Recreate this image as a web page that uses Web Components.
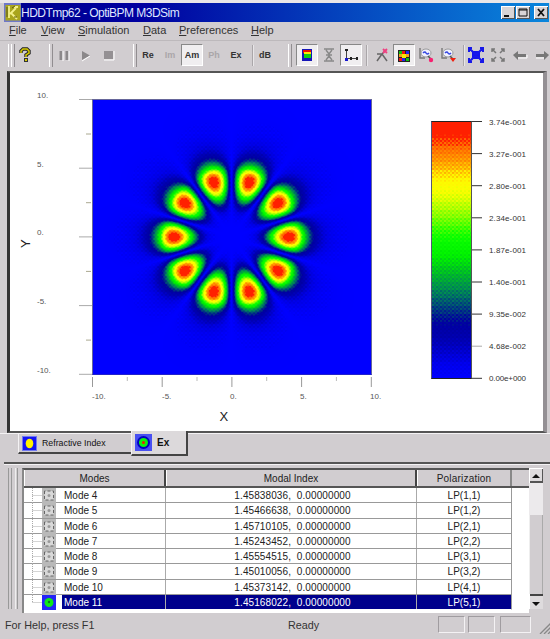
<!DOCTYPE html>
<html lang="en">
<head>
<meta charset="utf-8">
<title>HDDTmp62 - OptiBPM M3DSim</title>
<style>
  html, body { margin: 0; padding: 0; }
  body {
    width: 550px; height: 639px; overflow: hidden;
    background: #d1cdd0; color: #222;
    font-family: 'Liberation Sans', Arial, sans-serif; font-size: 10px;
  }
</style>
</head>
<body>
<app-window>
  <title-bar slot="title">HDDTmp62 - OptiBPM M3DSim</title-bar>
  <menu-bar slot="menu" items="File,View,Simulation,Data,Preferences,Help"></menu-bar>
  <tool-bar slot="tools"></tool-bar>
  <plot-view slot="view">
    <field-plot></field-plot>
    <color-scale></color-scale>
  </plot-view>
  <tab-strip slot="tabs">
    <view-tab icon="index" style="width:113px">Refractive Index</view-tab>
    <view-tab icon="field" style="width:57px" active>Ex</view-tab>
  </tab-strip>
  <mode-table slot="modes"></mode-table>
  <status-bar slot="status">
    <span>For Help, press F1</span>
    <span slot="state">Ready</span>
  </status-bar>
</app-window>

<script>
(function () {
  function define(name, html, setup) {
    customElements.define(name, class extends HTMLElement {
      connectedCallback() {
        if (this.shadowRoot) return;
        const shadow = this.attachShadow({ mode: 'open' });
        shadow.innerHTML = typeof html === 'function' ? html(this) : html;
        if (setup) setup(this, shadow);
      }
    });
  }

  // value 0..1 -> colour, shared by the field plot and the scale
  const STOPS = [
    [0, 0, 0, 255], [0.07, 0, 0, 228], [0.14, 0, 0, 180], [0.215, 0, 0, 158],
    [0.26, 0, 48, 132], [0.30, 0, 90, 112], [0.345, 0, 138, 84], [0.415, 0, 190, 36],
    [0.475, 0, 240, 0], [0.55, 10, 255, 0], [0.63, 130, 255, 0], [0.68, 196, 255, 0],
    [0.73, 250, 255, 0], [0.78, 255, 246, 0], [0.825, 255, 176, 0], [0.865, 255, 136, 0],
    [0.91, 255, 100, 0], [0.935, 255, 32, 0], [1, 255, 32, 0]
  ];
  const BAYER = [0, 8, 2, 10, 12, 4, 14, 6, 3, 11, 1, 9, 15, 7, 13, 5];

  function colorAt(v) {
    v = Math.max(0, Math.min(1, v));
    let i = 1;
    while (i < STOPS.length - 1 && v > STOPS[i][0]) i++;
    const a = STOPS[i - 1], b = STOPS[i];
    const t = (v - a[0]) / (b[0] - a[0]);
    return [1, 2, 3].map(k => a[k] + (b[k] - a[k]) * t);
  }

  function paint(canvas, amount, valueAt) {
    const w = canvas.width, h = canvas.height;
    const ctx = canvas.getContext('2d');
    const img = ctx.createImageData(w, h);
    for (let y = 0; y < h; y++) {
      for (let x = 0; x < w; x++) {
        const d = (BAYER[((y >> 1) & 3) * 4 + ((x >> 1) & 3)] / 15 - 0.5) * amount;
        const v = valueAt(x + 0.5, y + 0.5);
        const c = colorAt(v < 0.01 ? v : v + d);
        const p = (y * w + x) * 4;
        img.data[p] = c[0]; img.data[p + 1] = c[1]; img.data[p + 2] = c[2]; img.data[p + 3] = 255;
      }
    }
    ctx.putImageData(img, 0, 0);
  }

  // Bessel J5 as a power series
  function j5(x) {
    let term = Math.pow(x / 2, 5) / 120, sum = term;
    for (let m = 1; m < 24; m++) {
      term *= -(x * x / 4) / (m * (m + 5));
      sum += term;
    }
    return sum;
  }

  // LP(5,1): J5 in the core, decaying tail in the cladding
  function lp51(dx, dy) {
    const r = Math.hypot(dx, dy), core = 68, u = 6.41 / 57.5;
    const radial = r < core ? j5(u * r) : j5(u * core) * Math.exp(-0.086 * (r - core));
    return Math.abs(Math.cos(5 * Math.atan2(dy, dx))) * radial / 0.3741;
  }

  define('app-window', `
    <style>
      :host {
        display: grid; box-sizing: border-box; width: 550px; height: 639px;
        grid-template-rows: 19px 18px 31px 362px 27px 153px 23px;
        border-top: 3px solid #e9e6e8; background: #d1cdd0;
      }
    </style>
    <slot name="title"></slot><slot name="menu"></slot><slot name="tools"></slot>
    <slot name="view"></slot><slot name="tabs"></slot><slot name="modes"></slot>
    <slot name="status"></slot>
  `);

  define('title-bar', `
    <style>
      :host {
        display: flex; align-items: center; margin: 0 2px 0 4px; padding-right: 1px;
        background: linear-gradient(90deg, #00008e, #0000a0 25%, #0440bc 60%, #0a86dc);
        color: #dfe6ff; font-size: 12px; white-space: pre;
      }
      .logo { width: 17px; height: 19px; flex: none; }
      .caption { flex: 1; letter-spacing: -0.53px; }
      .btn { width: 14px; height: 13px; margin-left: 1px; background: #d8d4d6;
        box-shadow: inset 1px 1px #fff, inset -1px -1px #555; }
      .btn:last-child { margin-left: 4px; }
    </style>
    <svg class="logo" viewBox="0 0 17 19">
      <rect width="17" height="19" fill="#6f78c8"/><rect x="1.5" y="2" width="15" height="15.500" fill="#a9a51c"/>
      <path d="M5 3v12M6 11l6-6M7 10l6 6M10 4h4" stroke="#f3f08a" stroke-width="1.800" fill="none"/>
      <path d="M3 4v10M8 5l3-2M10 14h3" stroke="#5d5b10" stroke-width="1" fill="none"/>
    </svg>
    <span class="caption"><slot></slot></span>
    <svg class="btn" viewBox="0 0 14 13"><path d="M3 10h5" stroke="#111" stroke-width="2"/></svg>
    <svg class="btn" viewBox="0 0 14 13"><path d="M3 3h8v7h-8zM3 4h8" stroke="#111" fill="none"/></svg>
    <svg class="btn" viewBox="0 0 14 13"><path d="M4 3l6 7M10 3l-6 7" stroke="#111" stroke-width="1.8"/></svg>
  `);

  define('menu-bar', el => `
    <style>
      :host { display: flex; align-items: center; padding-left: 9px; font-size: 11px; color: #333; }
      span { display: block; box-sizing: border-box; padding-bottom: 2px; }
      span::first-letter { text-decoration: underline; }
      span:nth-child(2) { width: 32px; } span:nth-child(3) { width: 37px; }
      span:nth-child(4) { width: 65px; } span:nth-child(5) { width: 36px; }
      span:nth-child(6) { width: 72px; }
    </style>
    ${el.getAttribute('items').split(',').map(t => `<span>${t}</span>`).join('')}
  `);

  define('tool-button', `
    <style>
      :host { display: flex; box-sizing: border-box; width: 22px; height: 22px; flex: none;
        align-items: center; justify-content: center;
        font-size: 9px; font-weight: bold; color: #333; }
      :host([pressed]) { background: #f0eef0; border: 1px solid #fff;
        border-top-color: #888; border-left-color: #888; }
      :host([disabled]) { color: #aaa6a9; }
    </style>
    <slot></slot>
  `);

  const icon = (body, size = 16) => `<svg width="${size}" height="${size}" viewBox="0 0 16 16">${body}</svg>`;
  const CORNERS = '<path d="M2 5V2h3M11 2h3v3M14 11v3h-3M5 14H2v-3M2 2l4 4M14 2l-4 4M14 14l-4-4M2 14l4-4" stroke="#777" stroke-width="1.5" fill="none"/>';
  const ZOOM = tip => `<path d="M2 1v10h5" stroke="#777" stroke-width="1.4" fill="none"/>
    <ellipse cx="8" cy="6" rx="5" ry="4" fill="#f2f2ff" stroke="#999"/>
    <path d="M5 6q2-2 3 0t3 0" stroke="#3344e0" stroke-width="1.5" fill="none"/>
    <path d="M10 9l3 3" stroke="#555" stroke-width="1.5"/>${tip}`;

  define('tool-bar', `
    <style>
      :host { display: flex; align-items: center; box-sizing: border-box; overflow: hidden;
        padding: 0 0 2px 8px; border-top: 1px solid #bdb9bc; }
      i { width: 2px; height: 23px; flex: none; border-left: 1px solid #fff; border-right: 1px solid #918d90; }
      b { width: 1px; height: 21px; flex: none; background: #aaa6a9; border-right: 1px solid #e8e6e8; }
    </style>
    <i></i><i style="margin-left:-1px"></i>
    <tool-button style="margin-left:-1px">${icon('<path d="M4 6V4l2-2h4l2 2v2L9 8v2" fill="none" stroke="#222" stroke-width="3.4"/><path d="M4 6V4l2-2h4l2 2v2L9 8v2" fill="none" stroke="#d8cc00" stroke-width="1.5"/><path d="M7 11h4v4H7z" fill="#333"/><path d="M8 12h2v2H8z" fill="#d8cc00"/>')}</tool-button>
    <i style="margin-left:13px"></i>
    <tool-button>${icon('<path d="M5 4v9M11 4v9" stroke="#8b888a" stroke-width="3"/><path d="M7 4v10M13 4v10" stroke="#fff"/>')}</tool-button>
    <tool-button>${icon('<path d="M4 4l8 4.500-8 4.500z" fill="#8b888a"/><path d="M4 14l8-5" stroke="#fff"/>')}</tool-button>
    <tool-button>${icon('<path d="M4 4h9v8H4z" fill="#949093"/><path d="M4 13h10V4" stroke="#fff" fill="none"/>')}</tool-button>
    <i style="margin-left:14px"></i>
    <tool-button>Re</tool-button>
    <tool-button disabled>Im</tool-button>
    <tool-button pressed>Am</tool-button>
    <tool-button disabled>Ph</tool-button>
    <tool-button>Ex</tool-button>
    <b style="margin-left:5px"></b>
    <tool-button>dB</tool-button>
    <i style="margin-left:12px"></i>
    <tool-button pressed style="margin-left:4px">${icon('<path d="M3 2h10v12H3z" fill="#1515b8"/><path d="M4 3h8v3H4z" fill="#f01000"/><path d="M5 5h7v3H5z" fill="#ffe800"/><path d="M5 7h7v4H5z" fill="#13d010"/>')}</tool-button>
    <tool-button>${icon('<path d="M3 2h10M3 14h10M5 3l3 4 3-4M5 13l3-4 3 4M5 8h6" stroke="#888" stroke-width="1.4" fill="none"/>')}</tool-button>
    <tool-button pressed>${icon('<path d="M3.500 3v8.500h11" stroke="#444" fill="none"/><path d="M2 2h3v2H2zM7 10h2v3H7zM13 10h2v3h-2z" fill="#222"/><path d="M2 11h3v3H2z" fill="#1818d0"/>')}</tool-button>
    <b style="margin-left:4px"></b>
    <tool-button style="margin-left:3px">${icon('<path d="M3 7h5l5 7M8 7l-5 7M7 8l5-5" stroke="#666" stroke-width="1.5" fill="none"/><path d="M9 2l4 4M13 2l-4 4" stroke="#f04080" stroke-width="1.800"/>')}</tool-button>
    <tool-button pressed>${icon('<path d="M2 3h12v12H2z" fill="#222"/><path d="M3 4h3v3H3zM10 11h3v3h-3z" fill="#10c010"/><path d="M6 4h3v3H6zM3 11h3v3H3z" fill="#f01010"/><path d="M10 4h3v3h-3zM6 11h3v3H6z" fill="#2020f0"/><path d="M6 7h4v4H6z" fill="#f8e800"/><path d="M3 7h3v3H3zM10 7h3v3h-3z" fill="#f0a020"/>')}</tool-button>
    <tool-button>${icon(ZOOM('<circle cx="13" cy="13" r="2.200" fill="#f82070"/>'))}</tool-button>
    <tool-button>${icon(ZOOM('<path d="M10 11h6l-3 4z" fill="#f02010"/>'))}</tool-button>
    <b style="margin-left:4px"></b>
    <tool-button>${icon('<path d="M4 4h8v8H4z" fill="#1212f0"/><path d="M1 1l14 14M15 1L1 15M1 5V1h3M12 1h3v4M15 11v4h-3M4 15H1v-4" stroke="#1818e8" stroke-width="2" fill="none"/>')}</tool-button>
    <tool-button>${icon(CORNERS)}</tool-button>
    <tool-button>${icon('<path d="M1 8l5-4v3h8v3H6v3z" fill="#777"/><path d="M6 11h9V8" stroke="#fff" fill="none"/>')}</tool-button>
    <tool-button>${icon('<path d="M15 8l-5-4v3H2v3h8v3z" fill="#777"/><path d="M2 11h8" stroke="#fff" fill="none"/>')}</tool-button>
  `);

  define('plot-view', `
    <style>
      :host { display: flex; box-sizing: border-box; margin: 0 4px 0 7px; background: #fff;
        border: solid #555; border-width: 2px 4px 2px 3px;
        border-color: #555 #949094 #555 #333; }
    </style>
    <slot></slot>
  `);

  define('field-plot', () => {
    const ylab = ['10.', '5.', '0.', '-5.', '-10.'];
    const xlab = ['-10.', '-5.', '0.', '5.', '10.'];
    const ys = ylab.map((t, i) => `
      <path d="M79 ${99.5 + i * 68.7}h13" stroke="#aaa"/>
      <text x="37" y="${98 + i * 68.7}">${t}</text>`).join('');
    const xs = xlab.map((t, i) => `
      <path d="M${92.5 + i * 69.7} 377v10" stroke="#999"/>
      <text x="${[92, 162, 230, 300, 370][i]}" y="399">${t}</text>`).join('');
    const minor = [0, 1, 2, 3];
    return `
      <style>
        :host { display: grid; flex: none; grid-template: 26px 276px 1fr / 82px 280px; }
        svg { overflow: visible; fill: #555; font-size: 8px; }
        .y { grid-area: 1 / 1 / 4 / 2; }
        .x { grid-area: 3 / 2; }
        canvas { grid-area: 2 / 2; box-sizing: border-box; border: 1px solid #66669a; border-bottom-color: #2222cc; }
        .name { font-size: 13px; fill: #222; }
      </style>
      <svg class="y" width="82" height="358" viewBox="10 73 82 358">
        ${ys}
        ${minor.map(i => `<path d="M86 ${134 + i * 68.7}h5" stroke="#aaa890"/>`).join('')}
        <text class="name" transform="translate(30 248) rotate(-90)">Y</text>
      </svg>
      <canvas width="278" height="274"></canvas>
      <svg class="x" width="280" height="56" viewBox="92 375 280 56">
        ${xs}
        ${minor.map(i => `<path d="M${127.300 + i * 69.7} 377v4" stroke="#bbb"/>`).join('')}
        <text class="name" x="219.500" y="421">X</text>
      </svg>`;
  }, (el, shadow) => {
    paint(shadow.querySelector('canvas'), 0.04, (x, y) => lp51(x - 138.500, y - 137));
  });

  define('color-scale', () => {
    const labels = ['3.74e-001', '3.27e-001', '2.80e-001', '2.34e-001', '1.87e-001',
      '1.40e-001', '9.35e-002', '4.68e-002', '0.00e+000'];
    return `
      <style>
        :host { display: flex; align-items: flex-start; padding: 48px 0 0 59px; }
        canvas { box-sizing: border-box; flex: none; border: 1px solid #333; border-color: #222 #555 #222 #557; }
        svg { overflow: visible; font-size: 8px; fill: #333; }
      </style>
      <canvas width="39" height="256"></canvas>
      <svg width="60" height="258" viewBox="0 0 60 258">
        ${labels.map((t, i) => `<path d="M0 ${0.5 + i * 32.1}h10" stroke="${i === 7 ? '#aaa' : '#333'}"/>
        <text x="17" y="${3.5 + i * 32.1}" textLength="37">${t}</text>`).join('')}
      </svg>`;
  }, (el, shadow) => {
    paint(shadow.querySelector('canvas'), 0.05, (x, y) => 1 - y / 256);
  });

  define('tab-strip', `
    <style>
      :host { display: flex; align-items: flex-start; padding: 0 0 0 18px;
        border-top: 1px solid #f4f2f4; }
    </style>
    <slot></slot>
  `);

  define('view-tab', el => `
    <style>
      :host { display: flex; align-items: center; box-sizing: border-box; flex: none; height: 20px;
        border-left: 1px solid #f4f2f4; border-bottom: 2px solid #444;
        padding-left: 3px; font-size: 8.800px; color: #111; white-space: nowrap; }
      :host([active]) { height: 25px; margin-top: -3px; background: #dcd9db;
        border-right: 2px solid #444; font-size: 10px; font-weight: bold; }
      svg { flex: none; margin-right: 5px; }
    </style>
    ${el.getAttribute('icon') === 'index'
      ? '<svg width="15" height="15"><path d="M0 0h15v15H0z" fill="#1414f4"/><path d="M0 .5h15M0 14.500h15M.5 0v15M14.500 0v15" stroke="#7078f0"/><ellipse cx="7.500" cy="7.500" rx="3.800" ry="4.800" fill="#fff200"/></svg>'
      : '<svg width="17" height="17"><path d="M0 0h17v17H0z" fill="#4850f2"/><circle cx="8.500" cy="8.500" r="6.500" fill="#0000c0"/><circle cx="8.500" cy="8.500" r="4.500" fill="#10f010"/><circle cx="8.500" cy="8.500" r="1.500" fill="#f02000"/></svg>'}
    <slot></slot>
  `);

  define('mode-table', () => {
    const rows = [
      ['Mode 4', '1.45838036', 'LP(1,1)'], ['Mode 5', '1.45466638', 'LP(1,2)'],
      ['Mode 6', '1.45710105', 'LP(2,1)'], ['Mode 7', '1.45243452', 'LP(2,2)'],
      ['Mode 8', '1.45554515', 'LP(3,1)'], ['Mode 9', '1.45010056', 'LP(3,2)'],
      ['Mode 10', '1.45373142', 'LP(4,1)'], ['Mode 11', '1.45168022', 'LP(5,1)']
    ];
    const last = rows.length - 1;
    const cells = rows.map(([name, index, pol], i) => `
      <div class="row${i === last ? ' sel' : ''}">
        <svg width="38" height="15"><path d="M8.500 0v${i === last ? 8 : 15}M8.500 7.500h9" stroke="#aaa" stroke-dasharray="1 1" fill="none"/>
          ${i === last
            ? '<path d="M18 0h14v15H18z" fill="#2424f8"/><circle cx="25" cy="7.500" r="4.500" fill="#10e818"/><circle cx="25" cy="7" r="1.200" fill="#0a7a20"/>'
            : '<path d="M18 0h14v15H18z" fill="#b9b9b9"/><path d="M20.500 3v9h9V3z" fill="#d8d8d8" stroke="#666" stroke-dasharray="3 2"/><circle cx="25" cy="7.500" r="1.500" fill="#999"/>'}
        </svg>
        <span class="name">${name}</span><span class="idx">${index},&nbsp; 0.00000000</span><span class="pol">${pol}</span>
      </div>`).join('');
    return `
      <style>
        :host { display: flex; box-sizing: border-box; border-top: 2px solid #555; margin: 2px 0 4px 4px;
          padding: 4px 8px 0 4px; box-shadow: inset 0 1px #f4f2f4; }
        .grip { box-sizing: border-box; width: 4px; flex: none; margin-right: 3px; border-left: 1px solid #999; border-right: 1px solid #999; }
        .grip + .grip { width: 3px; margin-right: 4px; border-left-color: #eee; }
        .main { display: flex; width: 521px; flex: none; }
        .list { box-sizing: border-box; width: 507px; flex: none; border-top: 2px solid #555; border-left: 2px solid #888;
          background: #fff; height: 145px; }
        .head { display: flex; height: 16px; background: #d1cdd0; border-bottom: 2px solid #555; }
        .head span { box-sizing: border-box; text-align: center; line-height: 17px; border-right: 2px solid #444;
          border-left: 1px solid #fff; color: #222; }
        .head span:nth-child(1) { width: 142px; } .head span:nth-child(2) { width: 251px; }
        .head span:nth-child(3) { width: 95px; border-right-color: #888; letter-spacing: 0.2px; }
        .row { display: flex; box-sizing: border-box; width: 488px; height: 15.300px; line-height: 15px;
          border-bottom: 1px solid #999; border-right: 1px solid #999; white-space: nowrap; }
        .row svg { flex: none; }
        .row span { box-sizing: border-box; }
        .name { width: 104px; padding-left: 2px; border-right: 1px solid #aaa; }
        .idx { width: 251px; text-align: center; border-right: 1px solid #aaa; padding-left: 3px; letter-spacing: 0.1px; }
        .pol { flex: 1; text-align: center; }
        .sel span { background: #00008c; color: #fff; }
        .sel { border-bottom-color: #fff; }
        .bar { display: flex; flex-direction: column; width: 14px; background: #eceaec; flex: none; }
        .thumb { flex: 1; margin-top: 32px; background: #d1cdd0; border-left: 1px solid #eee; border-right: 1px solid #aaa; }
        .btn { background: #dedbdd; height: 15px; box-shadow: inset 1px 1px #fff, inset -1px -2px #555; }
        .btn.dn { box-shadow: inset 1px 0 #fff, inset 0 2px #444; }
      </style>
      <div class="grip"></div><div class="grip"></div>
      <div class="main">
        <div class="list">
          <div class="head"><span>Modes</span><span>Modal Index</span><span>Polarization</span></div>
          ${cells}
        </div>
        <div class="bar">
          <svg class="btn" viewBox="0 0 14 15"><path d="M7 6l4 4H3z" fill="#111"/></svg>
          <div class="thumb"></div>
          <svg class="btn dn" viewBox="0 0 14 15"><path d="M7 12L3 8h8z" fill="#111"/></svg>
        </div>
      </div>`;
  });

  define('status-bar', `
    <style>
      :host { display: flex; align-items: center; padding: 0 0 0 5px; font-size: 10.800px; color: #333; }
      .msg { width: 283px; }
      .state { flex: 1; }
      .pane { box-sizing: border-box; width: 27px; height: 17px; margin-right: 3px; border: 1px solid #a09ca0;
        border-right-color: #f4f2f4; border-bottom-color: #f4f2f4; }
      .pane:nth-of-type(3) { width: 31px; margin: 0 8px 0 2px; }
      svg { align-self: flex-end; margin-bottom: 2px; }
    </style>
    <span class="msg"><slot></slot></span><span class="state"><slot name="state"></slot></span>
    <div class="pane"></div><div class="pane"></div><div class="pane"></div>
    <svg width="12" height="13"><path d="M1 13L12 2M5 13l7-7M9 13l3-3" stroke="#888" stroke-width="1.300"/></svg>
  `);
})();
</script>
</body>
</html>
